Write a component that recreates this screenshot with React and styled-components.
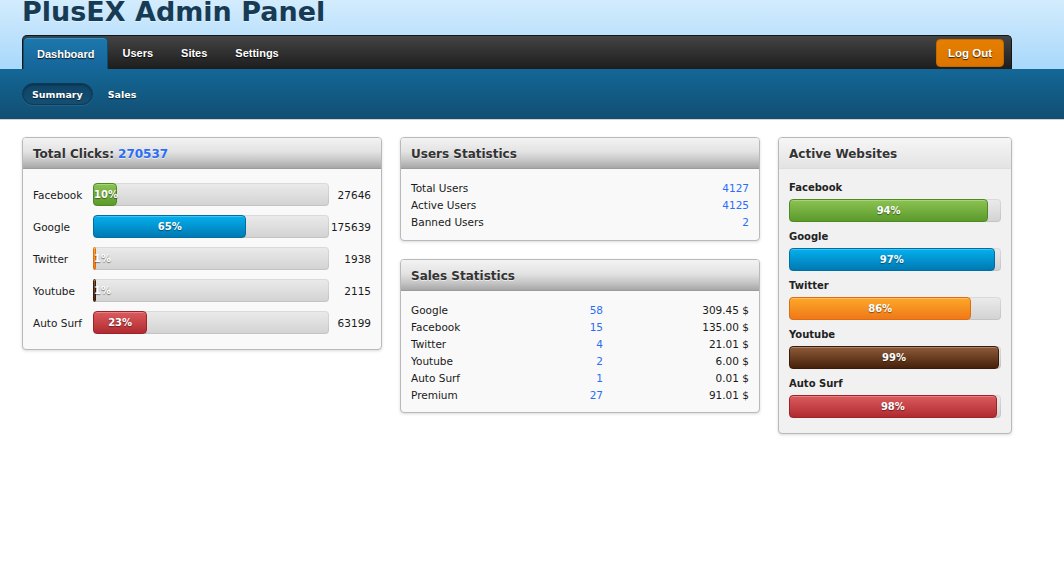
import React from 'react';
import styled, { createGlobalStyle, css } from 'styled-components';

const GlobalStyle = createGlobalStyle`
  html, body { margin: 0; padding: 0; background: #fff; }
  body {
    font-family: "DejaVu Sans", Verdana, sans-serif;
    font-size: 10.5px;
    color: #1a1a1a;
  }
`;

const Header = styled.header`
  height: 69px;
  box-sizing: border-box;
  padding: 0 22px;
  background: linear-gradient(#d3ecfd, #a8d8fb);
  display: flex;
  flex-direction: column;
`;

const Title = styled.h1`
  margin: 0;
  height: 35px;
  font-family: "DejaVu Sans", sans-serif;
  font-weight: bold;
  font-size: 27px;
  line-height: 23px;
  color: #173b55;
  text-shadow: 0 1px 0 rgba(255, 255, 255, 0.45);
`;

const NavBar = styled.nav`
  width: 990px;
  height: 34px;
  box-sizing: border-box;
  border: 1px solid #151515;
  border-bottom: none;
  border-radius: 5px 5px 0 0;
  background: linear-gradient(#444, #1d1d1d);
  display: flex;
  align-items: flex-end;
  justify-content: space-between;
  padding-right: 7px;
`;

const Tabs = styled.div`
  display: flex;
  align-items: flex-end;
  height: 100%;
`;

const Tab = styled.a`
  height: 32px;
  box-sizing: border-box;
  padding: 0 14px;
  display: flex;
  align-items: center;
  font-family: "Liberation Sans", Arial, sans-serif;
  font-weight: bold;
  font-size: 11px;
  color: #fff;
  text-shadow: 0 1px 1px rgba(0, 0, 0, 0.8);
  border-radius: 5px 5px 0 0;
  ${(p) =>
    p.$active &&
    css`
      padding: 0 13px;
      background: linear-gradient(#1d78ac, #15659a);
      border: 1px solid #0e4e75;
      border-bottom: none;
      box-shadow: inset 0 1px 0 rgba(255, 255, 255, 0.18);
    `}
`;

const LogOut = styled.button`
  align-self: center;
  height: 28px;
  box-sizing: border-box;
  padding: 0 11px;
  background: linear-gradient(#e57f00, #dc7400);
  border: 1px solid #c66800;
  border-radius: 4px;
  color: #fff;
  font-family: "Liberation Sans", Arial, sans-serif;
  font-weight: bold;
  font-size: 11.5px;
  text-shadow: 0 1px 1px rgba(0, 0, 0, 0.75);
  margin-top: 1px;
`;

const SubBar = styled.div`
  height: 50px;
  border-bottom: 1px solid #d2d2d2;
  background: linear-gradient(#136797, #124e72);
  display: flex;
  align-items: center;
  gap: 5px;
  padding-left: 22px;
`;

const SubTab = styled.a`
  height: 22px;
  box-sizing: border-box;
  padding: 0 9px;
  display: flex;
  align-items: center;
  border-radius: 11px;
  font-family: "DejaVu Sans", sans-serif;
  font-weight: bold;
  font-size: 9.5px;
  color: #fff;
  text-shadow: 0 1px 1px rgba(0, 0, 0, 0.6);
  border: 1px solid transparent;
  ${(p) =>
    p.$active &&
    css`
      background: linear-gradient(#0f4466, #144f73);
      border-color: #0c3a57;
      box-shadow: inset 0 1px 2px rgba(0, 0, 0, 0.35), 0 1px 0 rgba(255, 255, 255, 0.08);
    `}
`;

const Main = styled.main`
  display: flex;
  align-items: flex-start;
  gap: 18px;
  padding: 17px 22px;
`;

const Column = styled.div`
  width: ${(p) => p.$w}px;
  display: flex;
  flex-direction: column;
  gap: 18px;
`;

const Panel = styled.section`
  border: 1px solid #b9b9b9;
  border-radius: 4px;
  background: ${(p) => (p.$light ? '#f1f1f1' : '#f9f9f9')};
  box-shadow: 0 1px 3px rgba(0, 0, 0, 0.15);
  overflow: hidden;
`;

const PanelHeader = styled.h2`
  margin: 0;
  height: 31px;
  box-sizing: border-box;
  padding: 1px 0 0 10px;
  display: flex;
  align-items: center;
  font-family: "DejaVu Sans", sans-serif;
  font-weight: bold;
  font-size: 12px;
  color: #333;
  text-shadow: 0 1px 0 rgba(255, 255, 255, 0.6);
  background: ${(p) =>
    p.$light
      ? 'linear-gradient(#f6f6f6, #e3e3e3)'
      : 'linear-gradient(#f3f3f3, #e3e3e3 45%, #c6c6c6 75%, #a7a7a7)'};
  border-bottom: 1px solid ${(p) => (p.$light ? '#dedede' : '#9c9c9c')};
`;

const Accent = styled.span`
  color: #2a6ef5;
  margin-left: 4px;
`;

const ClickBody = styled.div`
  padding: 14px 10px 15px;
  display: flex;
  flex-direction: column;
  gap: 9px;
`;

const ClickRow = styled.div`
  display: grid;
  grid-template-columns: 60px 236px 1fr;
  align-items: center;
  height: 23px;
`;

const Count = styled.span`
  text-align: right;
`;

const Track = styled.div`
  height: 23px;
  border-radius: 4px;
  background: linear-gradient(#ebebeb, #d2d2d2);
  box-shadow: inset 0 0 0 1px rgba(0, 0, 0, 0.07);
`;

const fills = {
  green: ['#8cc353', '#5b9a2b', '#4e8a22'],
  blue: ['#04b0ef', '#0079b2', '#006da3'],
  orange: ['#fca829', '#f07818', '#dd6d10'],
  brown: ['#8e5b39', '#46210b', '#3a1a08'],
  red: ['#db5b5d', '#b02b31', '#9e2228'],
};

const Fill = styled.div`
  height: 100%;
  min-width: 3px;
  box-sizing: border-box;
  border-radius: 4px;
  border: 1px solid ${(p) => fills[p.$c][2]};
  background: linear-gradient(${(p) => fills[p.$c][0]}, ${(p) => fills[p.$c][1]});
  box-shadow: inset 0 1px 0 rgba(255, 255, 255, 0.25);
  color: #fff;
  font-family: "DejaVu Sans", sans-serif;
  font-weight: bold;
  font-size: 10px;
  line-height: 21px;
  text-align: center;
  white-space: nowrap;
  text-shadow: 0 1px 1px rgba(0, 0, 0, 0.45);
`;

const StatBody = styled.div`
  padding: 11px 10px ${(p) => p.$pb || 9}px;
`;

const StatRow = styled.div`
  display: grid;
  grid-template-columns: ${(p) => p.$cols};
  line-height: 17px;
  color: #1a1a1a;
`;

const Num = styled.span`
  text-align: right;
  color: ${(p) => (p.$blue ? '#2a6ef5' : '#1a1a1a')};
`;

const SiteBody = styled.div`
  padding: 11px 10px 15px;
  display: flex;
  flex-direction: column;
  gap: 7px;
`;

const SiteItem = styled.div`
  display: flex;
  flex-direction: column;
  gap: 4px;
`;

const SiteLabel = styled.div`
  font-weight: bold;
  font-size: 10px;
  line-height: 15px;
  color: #222;
`;

const clicks = [
  { name: 'Facebook', pct: 10, c: 'green', n: 27646 },
  { name: 'Google', pct: 65, c: 'blue', n: 175639 },
  { name: 'Twitter', pct: 1, c: 'orange', n: 1938 },
  { name: 'Youtube', pct: 1, c: 'brown', n: 2115 },
  { name: 'Auto Surf', pct: 23, c: 'red', n: 63199 },
];

const users = [
  ['Total Users', 4127],
  ['Active Users', 4125],
  ['Banned Users', 2],
];

const sales = [
  ['Google', 58, '309.45 $'],
  ['Facebook', 15, '135.00 $'],
  ['Twitter', 4, '21.01 $'],
  ['Youtube', 2, '6.00 $'],
  ['Auto Surf', 1, '0.01 $'],
  ['Premium', 27, '91.01 $'],
];

const sites = [
  { name: 'Facebook', pct: 94, c: 'green' },
  { name: 'Google', pct: 97, c: 'blue' },
  { name: 'Twitter', pct: 86, c: 'orange' },
  { name: 'Youtube', pct: 99, c: 'brown' },
  { name: 'Auto Surf', pct: 98, c: 'red' },
];

export default function App() {
  return (
    <>
      <GlobalStyle />
      <Header>
        <Title>PlusEX Admin Panel</Title>
        <NavBar>
          <Tabs>
            <Tab $active>Dashboard</Tab>
            <Tab>Users</Tab>
            <Tab>Sites</Tab>
            <Tab>Settings</Tab>
          </Tabs>
          <LogOut>Log Out</LogOut>
        </NavBar>
      </Header>
      <SubBar>
        <SubTab $active>Summary</SubTab>
        <SubTab>Sales</SubTab>
      </SubBar>
      <Main>
        <Column $w={360}>
          <Panel>
            <PanelHeader>
              Total Clicks:<Accent>270537</Accent>
            </PanelHeader>
            <ClickBody>
              {clicks.map((r) => (
                <ClickRow key={r.name}>
                  <span>{r.name}</span>
                  <Track>
                    <Fill $c={r.c} style={{ width: `${r.pct}%` }}>
                      {r.pct}%
                    </Fill>
                  </Track>
                  <Count>{r.n}</Count>
                </ClickRow>
              ))}
            </ClickBody>
          </Panel>
        </Column>
        <Column $w={360}>
          <Panel>
            <PanelHeader>Users Statistics</PanelHeader>
            <StatBody>
              {users.map(([k, v]) => (
                <StatRow key={k} $cols="1fr auto">
                  <span>{k}</span>
                  <Num $blue>{v}</Num>
                </StatRow>
              ))}
            </StatBody>
          </Panel>
          <Panel>
            <PanelHeader>Sales Statistics</PanelHeader>
            <StatBody $pb={8}>
              {sales.map(([k, n, v]) => (
                <StatRow key={k} $cols="150px 42px 1fr">
                  <span>{k}</span>
                  <Num $blue>{n}</Num>
                  <Num>{v}</Num>
                </StatRow>
              ))}
            </StatBody>
          </Panel>
        </Column>
        <Column $w={234}>
          <Panel $light>
            <PanelHeader $light>Active Websites</PanelHeader>
            <SiteBody>
              {sites.map((s) => (
                <SiteItem key={s.name}>
                  <SiteLabel>{s.name}</SiteLabel>
                  <Track>
                    <Fill $c={s.c} style={{ width: `${s.pct}%` }}>
                      {s.pct}%
                    </Fill>
                  </Track>
                </SiteItem>
              ))}
            </SiteBody>
          </Panel>
        </Column>
      </Main>
    </>
  );
}
